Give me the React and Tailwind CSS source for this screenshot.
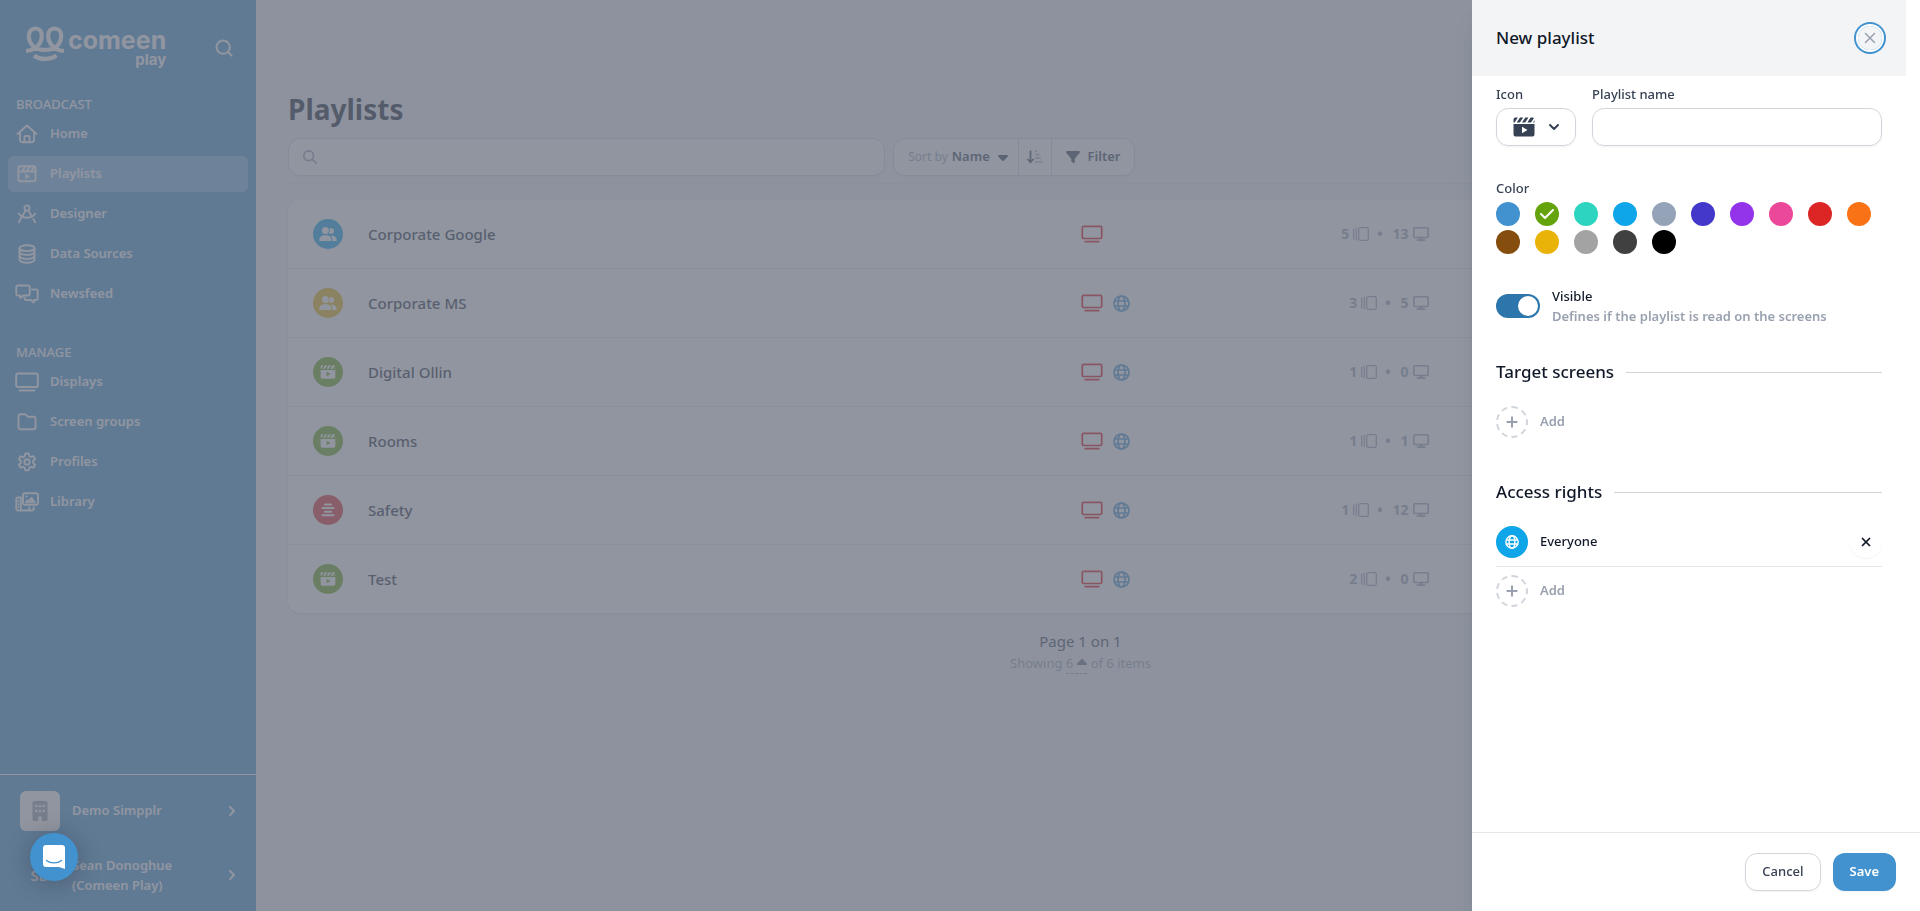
import { useState } from 'react'
import {
  FaBuilding,
  FaCaretDown,
  FaCaretUp,
  FaCheck,
  FaFilter,
  FaMagnifyingGlass,
  FaUserGroup,
} from 'react-icons/fa6'
import { ChevronDown, ChevronRight, Plus, Search, X } from 'lucide-react'

/* ---------- Icons ---------- */

const LineIcon = ({ className = 'w-5 h-5', viewBox = '0 0 20 20', children }) => (
  <svg
    viewBox={viewBox}
    className={className}
    fill="none"
    stroke="currentColor"
    strokeWidth="1.9"
    strokeLinecap="round"
    strokeLinejoin="round"
    aria-hidden="true"
  >
    {children}
  </svg>
)

const HomeIcon = () => (
  <LineIcon className="w-[22px] h-5" viewBox="0 0 22 20">
    <path d="M1.5 10 11 1.5 20.5 10" />
    <path d="M4 8v8a2.2 2.2 0 0 0 2.2 2.2h9.6a2.2 2.2 0 0 0 2.2-2.2V8" />
    <path d="M8.400 18v-5a1 1 0 0 1 1-1h3.200a1 1 0 0 1 1 1v5" />
  </LineIcon>
)

const PlaylistsIcon = () => (
  <LineIcon>
    <rect x="1.500" y="2.300" width="17" height="15" rx="2" />
    <path d="M1.500 7.500h17M5 7.200l3.500-4.600M9.500 7.200 13 2.600M14 7.200l3.500-4.600" />
    <path d="M8.500 10v5l4-2.500z" fill="currentColor" strokeWidth="0.500" />
  </LineIcon>
)

const DesignerIcon = () => (
  <LineIcon>
    <circle cx="10" cy="4" r="2.600" />
    <path d="m8.600 6.500-6.800 11.800M11.400 6.500l3 5.200M16.300 15l1.900 3.300" />
    <path d="M1.800 9.500c1.600 2.600 4.600 4.200 8.200 4.200s6.600-1.600 8.200-4.200" />
  </LineIcon>
)

const DatabaseIcon = () => (
  <LineIcon>
    <ellipse cx="10" cy="4.200" rx="7.500" ry="2.900" />
    <path d="M2.500 4.200v11.600c0 1.600 3.400 2.900 7.500 2.900s7.500-1.300 7.500-2.900V4.200" />
    <path d="M2.500 8c0 1.600 3.400 2.900 7.500 2.900S17.500 9.600 17.500 8M2.500 12c0 1.600 3.400 2.900 7.500 2.900s7.500-1.300 7.500-2.900" />
  </LineIcon>
)

const MessagesIcon = () => (
  <LineIcon className="w-6 h-5" viewBox="0 0 24 20">
    <path d="M2.800 1.500h10.400a1.500 1.500 0 0 1 1.500 1.500v7a1.500 1.500 0 0 1-1.500 1.500H8.500L5.200 14v-2.500H2.800A1.500 1.500 0 0 1 1.300 10V3a1.500 1.500 0 0 1 1.500-1.500z" />
    <path d="M17 5.500h4.200a1.500 1.500 0 0 1 1.500 1.500v7.500a1.500 1.500 0 0 1-1.500 1.500h-2.400v2.500L15.500 16H11a1.500 1.500 0 0 1-1.500-1.500v-.8" />
  </LineIcon>
)

const TvIcon = ({ className = 'w-6 h-5' }) => (
  <LineIcon className={className} viewBox="0 0 24 20">
    <rect x="1.200" y="1.500" width="21.600" height="13.500" rx="1.600" />
    <path d="M4.500 18.500h15" />
  </LineIcon>
)

const FolderIcon = () => (
  <LineIcon>
    <path d="M3.300 2.300h4.200c.6 0 1.100.2 1.500.6l1.200 1.200c.4.4.9.6 1.500.6h5a1.800 1.800 0 0 1 1.800 1.800v9a1.800 1.800 0 0 1-1.800 1.800H3.300a1.800 1.800 0 0 1-1.800-1.800V4.100a1.800 1.800 0 0 1 1.800-1.800z" />
  </LineIcon>
)

const GearIcon = () => (
  <LineIcon>
    <circle cx="10" cy="10" r="2.700" />
    <path d="M8.300 1.500h3.400l.6 2.600 1.500.9 2.600-.8 1.700 2.900-2 1.900v1.900l2 1.900-1.700 2.900-2.600-.8-1.500.9-.6 2.600H8.300l-.6-2.600-1.500-.9-2.600.8-1.700-2.900 2-1.900V9.100l-2-1.900 1.700-2.900 2.600.8 1.500-.9z" />
  </LineIcon>
)

const LibraryIcon = () => (
  <LineIcon className="w-6 h-5" viewBox="0 0 24 20">
    <rect x="8" y="1.300" width="15" height="11.400" rx="1.500" />
    <path d="m10.300 10.500 2.400-3 1.200 1.300 2.600-3.800 4 5.500z" fill="currentColor" strokeWidth="1" />
    <circle cx="11.300" cy="4.400" r="0.800" fill="currentColor" strokeWidth="0.600" />
    <path d="M5.500 5.500H2.800A1.500 1.500 0 0 0 1.300 7v10a1.500 1.500 0 0 0 1.500 1.500h14.400a1.500 1.500 0 0 0 1.500-1.500v-1.500M5.800 5.500v13M14.300 15.500v3" />
    <path d="M3.500 9v.1M3.500 12v.1M3.500 15v.1" />
  </LineIcon>
)

const GlobeIcon = ({ className }) => (
  <svg viewBox="0 0 17 17" className={className} fill="none" stroke="currentColor" strokeWidth="1.700" aria-hidden="true">
    <circle cx="8.500" cy="8.500" r="7.500" />
    <ellipse cx="8.500" cy="8.500" rx="3.500" ry="7.500" />
    <path d="M1.500 6h14M1.500 11h14" />
  </svg>
)

const ClapperIcon = ({ className }) => (
  <svg viewBox="0 0 22 20" className={className} fill="currentColor" aria-hidden="true">
    <path d="M2.500.5h2.400L1.600 5.500H.5v-3a2 2 0 0 1 2-2zM7 .5h3.200L6.900 5.500H3.700zM12.300.5h3.200l-3.300 5H9zM17.600.5h1.900c.6 0 1.100.2 1.500.6l-3 4.400h-3.700zM21.500 3.200v2.300H20z" />
    <path
      fillRule="evenodd"
      d="M.5 7h21v10.500a2 2 0 0 1-2 2h-17a2 2 0 0 1-2-2zM9 9.800v6.400l5.500-3.200z"
    />
  </svg>
)

const AlignIcon = ({ className }) => (
  <svg viewBox="0 0 14 14" className={className} stroke="currentColor" strokeWidth="2" strokeLinecap="round" aria-hidden="true">
    <path d="M4 1.500h6M1.500 5h11M4 8.700h6M1.500 12.300h11" />
  </svg>
)

const SlidesIcon = () => (
  <svg viewBox="0 0 16 14" className="w-4 h-3.5" fill="none" stroke="currentColor" aria-hidden="true">
    <rect x="5.700" y="0.700" width="9.600" height="12.600" rx="1.500" strokeWidth="1.300" />
    <path d="M.7 2v10M3.200 1.200v11.600" strokeWidth="1.200" strokeLinecap="round" />
  </svg>
)

const DesktopIcon = () => (
  <svg viewBox="0 0 16 14" className="w-4 h-3.5" fill="none" stroke="currentColor" strokeWidth="1.600" aria-hidden="true">
    <rect x="0.800" y="0.800" width="14.400" height="9.700" rx="1" />
    <path d="M6.500 10.500h3v2h-3z" fill="currentColor" strokeWidth="0" />
    <path d="M4.300 13.100h7.400" strokeLinecap="round" />
  </svg>
)

const SortIcon = () => (
  <svg viewBox="0 0 16 14" className="w-4 h-3.5" fill="none" stroke="currentColor" strokeWidth="1.700" strokeLinecap="round" aria-hidden="true">
    <path d="M3.500 1v11M1 9.500 3.500 12.300 6 9.500" />
    <path d="M8.700 1.200h1M8.700 4.700h3M8.700 8.200h4.500M8.700 12h6.300" opacity="0.400" />
  </svg>
)

const Logo = () => (
  <a href="#home" aria-label="comeen play" className="flex gap-1 text-white font-['Inter',sans-serif] font-bold">
    <svg viewBox="0 0 38 36" className="w-[38px] h-9" fill="none" stroke="currentColor" aria-hidden="true">
      <path
        d="M0 25C9 24.500 15.800 18 15.800 9.800 15.800 5.300 13.300 2.500 9.500 2.500S2.800 5.500 2.800 9.800C2.800 18.500 9 24 19 24S35.200 18.500 35.200 9.800C35.200 5.500 32.300 2.500 28.500 2.500S22.200 5.300 22.200 9.800C22.200 18 29 24.500 38 25"
        strokeWidth="4.200"
      />
      <path d="M8 29.500c6 4.600 16 4.600 22.500 0" strokeWidth="4.200" />
    </svg>
    <span className="flex flex-col items-end">
      <span className="text-[25px] leading-7">comeen</span>
      <span className="text-[15px] leading-3">play</span>
    </span>
  </a>
)

/* ---------- Data ---------- */

const navSections = [
  {
    title: 'BROADCAST',
    items: [
      { label: 'Home', icon: HomeIcon },
      { label: 'Playlists', icon: PlaylistsIcon, active: true },
      { label: 'Designer', icon: DesignerIcon },
      { label: 'Data Sources', icon: DatabaseIcon },
      { label: 'Newsfeed', icon: MessagesIcon },
    ],
  },
  {
    title: 'MANAGE',
    items: [
      { label: 'Displays', icon: TvIcon },
      { label: 'Screen groups', icon: FolderIcon },
      { label: 'Profiles', icon: GearIcon },
      { label: 'Library', icon: LibraryIcon },
    ],
  },
]

const playlists = [
  { name: 'Corporate Google', icon: FaUserGroup, color: 'bg-[#0ea5e9]', global: false, slides: 5, screens: 13 },
  { name: 'Corporate MS', icon: FaUserGroup, color: 'bg-[#eab308]', global: true, slides: 3, screens: 5 },
  { name: 'Digital Ollin', icon: ClapperIcon, color: 'bg-[#65a30d]', global: true, slides: 1, screens: 0 },
  { name: 'Rooms', icon: ClapperIcon, color: 'bg-[#65a30d]', global: true, slides: 1, screens: 1 },
  { name: 'Safety', icon: AlignIcon, color: 'bg-[#dc2626]', global: true, slides: 1, screens: 12 },
  { name: 'Test', icon: ClapperIcon, color: 'bg-[#65a30d]', global: true, slides: 2, screens: 0 },
]

const colors = [
  { name: 'blue', className: 'bg-[#4192cf]' },
  { name: 'green', className: 'bg-[#65a30d]' },
  { name: 'teal', className: 'bg-[#2dd4bf]' },
  { name: 'sky', className: 'bg-[#0ea5e9]' },
  { name: 'slate', className: 'bg-[#94a3b8]' },
  { name: 'indigo', className: 'bg-[#4338ca]' },
  { name: 'purple', className: 'bg-[#9333ea]' },
  { name: 'pink', className: 'bg-[#ec4899]' },
  { name: 'red', className: 'bg-[#dc2626]' },
  { name: 'orange', className: 'bg-[#f97316]' },
  { name: 'brown', className: 'bg-[#854d0e]' },
  { name: 'yellow', className: 'bg-[#eab308]' },
  { name: 'gray', className: 'bg-[#a3a3a3]' },
  { name: 'charcoal', className: 'bg-[#404040]' },
  { name: 'black', className: 'bg-black' },
]

/* ---------- Page ---------- */

const Sidebar = () => (
  <aside className="w-64 h-screen shrink-0 flex flex-col bg-[#4192cf] text-white text-[13px] font-semibold">
    <div className="flex items-start justify-between pl-[26px] pr-[22px] pt-[26px] h-24">
      <Logo />
      <button type="button" aria-label="Search" className="mt-3">
        <Search className="w-5 h-5" strokeWidth={2.4} />
      </button>
    </div>

    <nav className="flex flex-col gap-8">
      {navSections.map((section) => (
        <div key={section.title}>
          <h2 className="px-4 leading-4 mb-1 font-medium">{section.title}</h2>
          <ul className="px-2 flex flex-col gap-1">
            {section.items.map(({ label, icon: Icon, active }) => (
              <li key={label}>
                <a
                  href={`#${label}`}
                  className={`flex items-center gap-[11px] h-9 pl-[7px] rounded-md ${active ? 'bg-[#79b8e6]' : ''}`}
                >
                  <span className="w-6 flex justify-center">
                    <Icon />
                  </span>
                  {label}
                </a>
              </li>
            ))}
          </ul>
        </div>
      ))}
    </nav>

    <div className="mt-auto border-t border-white py-4">
      <button type="button" className="w-full flex items-center pl-5 pr-4 text-left">
        <span className="w-10 h-10 mr-3 rounded-md bg-white text-gray-400 flex items-center justify-center">
          <FaBuilding className="w-4 h-5" />
        </span>
        Demo Simpplr
        <ChevronRight className="w-4 h-5 ml-auto" strokeWidth={3} />
      </button>
      <button type="button" className="w-full flex items-center mt-6 pl-5 pr-4 text-left leading-5">
        <span className="w-10 mr-3 text-[15px] text-center">SD</span>
        <span>
          Sean Donoghue
          <br />
          (Comeen Play)
        </span>
        <ChevronRight className="w-4 h-5 ml-auto" strokeWidth={3} />
      </button>
    </div>
  </aside>
)

const PlaylistRow = ({ playlist }) => {
  const Icon = playlist.icon
  return (
    <li className="box-content flex items-center h-17 border-b border-gray-200 last:border-b-0">
      <div className="w-1/2 pl-[25px] flex items-center">
        <span className={`w-[30px] h-[30px] mr-[25px] rounded-full text-white flex items-center justify-center ${playlist.color}`}>
          <Icon className="w-[18px] h-3.5" />
        </span>
        <a href={`#${playlist.name}`} className="text-[15px] font-medium text-gray-800">
          {playlist.name}
        </a>
      </div>
      <div className="w-1/2 flex items-center">
        <div className="w-[348px] flex items-center gap-2.5">
          <span className="text-red-600">
            <TvIcon className="w-[22px] h-[18px]" />
          </span>
          {playlist.global && <GlobeIcon className="w-[17px] h-[17px] text-[#4192cf]" />}
          <span className="ml-auto flex items-center text-sm font-bold text-gray-400">
            {playlist.slides}
            <span className="ml-1 mr-2">
              <SlidesIcon />
            </span>
            •
            <span className="ml-2.5 mr-1">{playlist.screens}</span>
            <DesktopIcon />
          </span>
        </div>
      </div>
    </li>
  )
}

const PlaylistsPage = () => (
  <main className="flex-1 min-w-0 bg-gray-100 pt-[85px] pl-8 pr-[47px]">
    <h1 className="text-[28px] leading-[48px] font-bold text-gray-900">Playlists</h1>

    <div className="flex gap-2 mt-[5px] pb-[7px] border-b border-gray-200">
      <label className="w-[597px] h-[38px] flex items-center gap-3 pl-3.5 bg-white border border-gray-300 rounded-xl shadow-xs">
        <FaMagnifyingGlass className="w-3.5 h-3.5 text-gray-400" />
        <input type="search" aria-label="Search playlists" className="flex-1 outline-none" />
      </label>
      <div className="flex h-[38px] bg-white border border-gray-300 rounded-xl shadow-xs divide-x divide-gray-300 text-[13px] font-semibold text-gray-700">
        <button type="button" aria-haspopup="listbox" className="w-[125px] pl-1 flex items-center justify-center gap-1">
          <span className="text-xs font-normal text-gray-400">Sort by</span>
          Name
          <FaCaretDown className="w-2.5 h-4 ml-1" />
        </button>
        <button type="button" aria-label="Sort order" className="w-[33px] flex items-center justify-center">
          <SortIcon />
        </button>
        <button type="button" className="w-[82px] flex items-center justify-center gap-2">
          <FaFilter className="w-3.5 h-3.5" />
          Filter
        </button>
      </div>
    </div>

    <ul className="mt-4 bg-white rounded-xl shadow-sm">
      {playlists.map((playlist) => (
        <PlaylistRow key={playlist.name} playlist={playlist} />
      ))}
    </ul>

    <div className="mt-4 text-center">
      <p className="text-[15px] leading-6 text-gray-700">Page 1 on 1</p>
      <p className="text-[13px] leading-5 text-gray-400">
        Showing{' '}
        <button type="button" className="inline-flex items-center border-b border-dashed border-gray-400">
          6
          <FaCaretUp className="w-2.5 h-4 ml-1 text-gray-500" />
        </button>{' '}
        of 6 items
      </p>
    </div>
  </main>
)

/* ---------- New playlist drawer ---------- */

const SectionTitle = ({ children }) => (
  <div className="flex items-center gap-3">
    <h3 className="text-[17px] leading-7 font-medium text-gray-900">{children}</h3>
    <div className="flex-1 border-t border-gray-300" />
  </div>
)

const AddButton = () => (
  <button type="button" className="flex items-center gap-3 font-semibold text-gray-400">
    <span className="w-8 h-8 rounded-full border-2 border-dashed border-gray-300 flex items-center justify-center">
      <Plus className="w-4 h-4" strokeWidth={3} />
    </span>
    Add
  </button>
)

const NewPlaylistDrawer = () => {
  const [name, setName] = useState('')
  const [color, setColor] = useState('green')
  const [visible, setVisible] = useState(true)

  return (
    <form
      role="dialog"
      aria-label="New playlist"
      className="fixed inset-y-0 right-0 w-[448px] flex flex-col bg-white shadow-xl text-[13px] font-medium text-gray-900"
    >
      <div className="flex-1 pr-3.5">
        <header className="h-[76px] px-6 flex items-center justify-between bg-gray-100">
          <h2 className="text-[17px] leading-7 font-medium">New playlist</h2>
          <button
            type="button"
            aria-label="Close"
            className="w-6 h-6 rounded-full ring-2 ring-[#4192cf] ring-offset-2 ring-offset-white flex items-center justify-center text-gray-400"
          >
            <X className="w-[18px] h-[18px]" strokeWidth={2} />
          </button>
        </header>

        <div className="px-6 pt-2">
          <div className="flex gap-4">
            <div className="w-20">
              <span className="block leading-5 mb-1 text-gray-700">Icon</span>
              <button
                type="button"
                aria-label="Icon"
                className="w-full h-[38px] pl-0.5 flex items-center justify-center gap-[11px] border border-gray-300 rounded-xl shadow-xs text-gray-700"
              >
                <ClapperIcon className="w-[22px] h-5" />
                <ChevronDown className="w-4 h-4" strokeWidth={3} />
              </button>
            </div>
            <div className="flex-1">
              <label htmlFor="playlist-name" className="block leading-5 mb-1 text-gray-700">
                Playlist name
              </label>
              <input
                id="playlist-name"
                type="text"
                value={name}
                onChange={(e) => setName(e.target.value)}
                className="w-full h-[38px] px-3 border border-gray-300 rounded-xl shadow-xs outline-none"
              />
            </div>
          </div>

          <fieldset className="mt-8">
            <legend className="leading-5 mb-1 text-gray-700">Color</legend>
            <div className="grid grid-cols-10 gap-1">
              {colors.map((c) => (
                <label key={c.name} className={`relative w-6 h-6 rounded-full flex items-center justify-center text-white ${c.className}`}>
                  <input
                    type="radio"
                    name="color"
                    aria-label={c.name}
                    checked={color === c.name}
                    onChange={() => setColor(c.name)}
                    className="absolute inset-0 appearance-none"
                  />
                  {color === c.name && <FaCheck className="w-4 h-4" />}
                </label>
              ))}
            </div>
          </fieldset>

          <label className="mt-8 flex items-center gap-3">
            <span className="relative w-11 h-6">
              <input
                type="checkbox"
                role="switch"
                checked={visible}
                onChange={(e) => setVisible(e.target.checked)}
                className="peer block appearance-none w-11 h-6 rounded-full bg-gray-200 checked:bg-[#2c76ab]"
              />
              <span className="absolute top-0.5 left-0.5 w-5 h-5 rounded-full bg-white peer-checked:translate-x-5" />
            </span>
            <span className="leading-5">
              Visible
              <span className="block font-semibold text-gray-400">Defines if the playlist is read on the screens</span>
            </span>
          </label>

          <section className="mt-8">
            <SectionTitle>Target screens</SectionTitle>
            <div className="mt-5">
              <AddButton />
            </div>
          </section>

          <section className="mt-10">
            <SectionTitle>Access rights</SectionTitle>
            <div className="mt-5 pb-2 flex items-center gap-3 border-b border-gray-200">
              <span className="w-8 h-8 rounded-full bg-[#0ea5e9] text-white flex items-center justify-center">
                <GlobeIcon className="w-3.5 h-3.5" />
              </span>
              Everyone
              <button
                type="button"
                aria-label="Remove Everyone"
                className="ml-auto w-8 h-8 rounded-full shadow-xs flex items-center justify-center"
              >
                <X className="w-3.5 h-3.5" strokeWidth={3} />
              </button>
            </div>
            <div className="mt-2">
              <AddButton />
            </div>
          </section>
        </div>
      </div>

      <footer className="flex justify-end gap-3 px-6 py-5 border-t border-gray-200">
        <button type="button" className="h-[38px] px-4 border border-gray-300 rounded-xl shadow-xs text-gray-700">
          Cancel
        </button>
        <button
          type="submit"
          className="h-[38px] px-4 border border-transparent rounded-xl shadow-xs bg-[#4192cf] text-white font-semibold"
        >
          Save
        </button>
      </footer>
    </form>
  )
}

const ChatLauncher = () => (
  <button
    type="button"
    aria-label="Open chat"
    className="fixed left-[30px] bottom-[30px] w-12 h-12 rounded-full bg-[#4192cf] shadow-[0_2px_24px_rgba(0,0,0,0.25)] flex items-center justify-center"
  >
    <svg viewBox="0 0 22 24" className="w-[22px] h-6" aria-hidden="true">
      <path d="M3 0h16a3 3 0 0 1 3 3v21l-6-2H3a3 3 0 0 1-3-3V3a3 3 0 0 1 3-3z" fill="#fff" />
      <path d="M3.500 15.500c4 3.200 11 3.200 15 0" fill="none" stroke="#4192cf" strokeWidth="1.400" strokeLinecap="round" />
    </svg>
  </button>
)

const App = () => (
  <div className="flex min-h-screen font-['Noto_Sans',sans-serif]">
    <Sidebar />
    <PlaylistsPage />
    <div className="fixed inset-0 bg-[#6b7280]/75" />
    <ChatLauncher />
    <NewPlaylistDrawer />
  </div>
)

export default App
